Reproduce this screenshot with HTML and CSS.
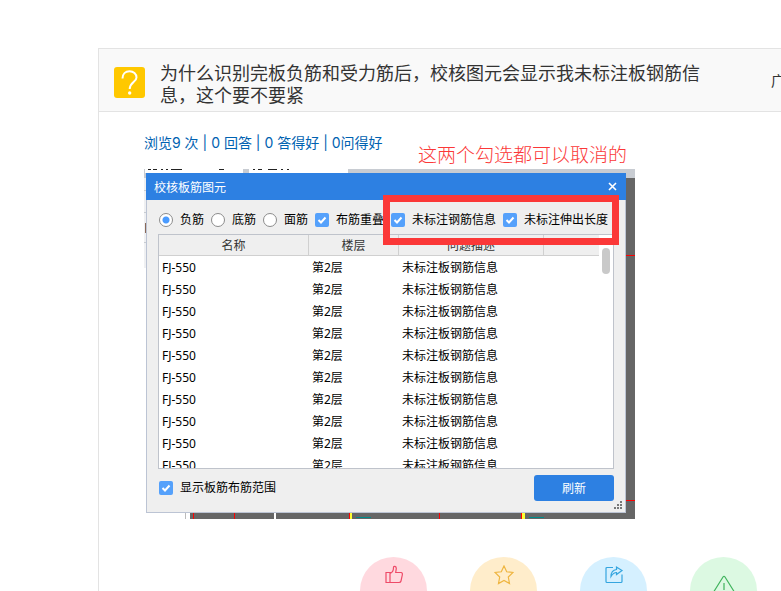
FILE: index.html
```html
<!DOCTYPE html>
<html lang="zh-CN">
<head>
  <meta charset="UTF-8">
  <meta name="viewport" content="width=device-width, initial-scale=1.0">
  <title>问答</title>
  <link rel="stylesheet" href="styles.css">
</head>
<body>

  <main class="question">
    <header class="question-head">
      <svg class="question-icon" viewBox="0 0 31 31">
        <rect width="31" height="31" rx="3" fill="#ffc800"/>
        <path d="M8.500 11.500C8.500 6.800 11.500 4.200 15.500 4.200S22.500 7 22.500 10.500C22.500 15 15.700 15.500 15.700 22" fill="none" stroke="#fff" stroke-width="2"/>
        <circle cx="15.700" cy="26" r="1.700" fill="#fff"/>
      </svg>
      <h1>为什么识别完板负筋和受力筋后，校核图元会显示我未标注板钢筋信息，这个要不要紧</h1>
      <span class="author">广</span>
    </header>

    <div class="question-body">
      <p class="stats">浏览9 次 | 0 回答 | 0 答得好 | 0问得好</p>

      <p class="note">这两个勾选都可以取消的</p>
      <div class="shot">
        <svg class="backdrop" viewBox="0 0 491 350" shape-rendering="crispEdges">
          <rect x="46" width="445" height="350" fill="#666"/>
          <rect width="491" height="9" fill="#c8ccd2"/>
          <rect x="1" width="98" height="4" fill="#fff"/>
          <rect x="105" width="99" height="4" fill="#fff"/>
          <path d="M4 .5H7M9 .5H13M17 .5H19M22 .5H24M27 .5H38M75 .5H80M109 .5H111M114 .5H118M124 .5H133M137 .5H139M143 .5H145" stroke="#222"/>
          <rect x="0" y="9" width="2" height="90" fill="#eff0f2"/>
          <path d="M0 21.500H2M0 43.500H2M0 73.500H2" stroke="#c8ccd2"/>
          <path d="M1.500 54V64" stroke="#8a6a5a"/>
          <path d="M41.500 344V350" stroke="#bbb"/>
          <path d="M49.500 344V350M90.500 344V350M90.500 344V350M205.500 344V350M377.500 344V350M295.500 344V350M482 331.500H491M482 86.500H491" stroke="#f00"/>
          <path d="M131 344V350" stroke="#fff" stroke-width="2"/>
          <path d="M207 344V350" stroke="#ff3" stroke-width="2"/>
          <path d="M379.500 344V350" stroke="#ff3" stroke-width="3"/>
          <path d="M212 348.500H227M385 348.500H400" stroke="#008b8b"/>
        </svg>

        <section class="dialog">
          <div class="dialog-title">
            <h2>校核板筋图元</h2>
            <button class="close" type="button" aria-label="关闭">
              <svg viewBox="0 0 9 9"><path d="M1 1L8 8M8 1L1 8" stroke="#fff" stroke-width="1.600"/></svg>
            </button>
          </div>

          <form class="dialog-body">
            <div class="options">
              <label><input type="radio" name="kind" checked>负筋</label>
              <label><input type="radio" name="kind">底筋</label>
              <label><input type="radio" name="kind">面筋</label>
              <label><input type="checkbox" checked>布筋重叠</label>
              <label><input type="checkbox" checked>未标注钢筋信息</label>
              <label><input type="checkbox" checked>未标注伸出长度</label>
            </div>

            <div class="list">
              <table>
                <colgroup><col class="col-name"><col class="col-floor"><col class="col-info"><col></colgroup>
                <thead>
                  <tr><th>名称</th><th>楼层</th><th>问题描述</th><th></th></tr>
                </thead>
                <tbody>
                  <tr><td>FJ-550</td><td>第2层</td><td>未标注板钢筋信息</td><td></td></tr>
                  <tr><td>FJ-550</td><td>第2层</td><td>未标注板钢筋信息</td><td></td></tr>
                  <tr><td>FJ-550</td><td>第2层</td><td>未标注板钢筋信息</td><td></td></tr>
                  <tr><td>FJ-550</td><td>第2层</td><td>未标注板钢筋信息</td><td></td></tr>
                  <tr><td>FJ-550</td><td>第2层</td><td>未标注板钢筋信息</td><td></td></tr>
                  <tr><td>FJ-550</td><td>第2层</td><td>未标注板钢筋信息</td><td></td></tr>
                  <tr><td>FJ-550</td><td>第2层</td><td>未标注板钢筋信息</td><td></td></tr>
                  <tr><td>FJ-550</td><td>第2层</td><td>未标注板钢筋信息</td><td></td></tr>
                  <tr><td>FJ-550</td><td>第2层</td><td>未标注板钢筋信息</td><td></td></tr>
                  <tr><td>FJ-550</td><td>第2层</td><td>未标注板钢筋信息</td><td></td></tr>
                </tbody>
              </table>
              <div class="scrollbar"><span class="thumb"></span></div>
            </div>

            <div class="dialog-foot">
              <label><input type="checkbox" checked>显示板筋布筋范围</label>
              <button class="refresh" type="button">刷新</button>
            </div>
          </form>

          <svg class="grip" viewBox="0 0 8 8" shape-rendering="crispEdges">
            <path d="M6 0h2v2h-2zM3 3h2v2h-2zM6 3h2v2h-2zM0 6h2v2h-2zM3 6h2v2h-2zM6 6h2v2h-2z" fill="#777"/>
          </svg>
        </section>
        <div class="highlight"></div>
      </div>

      <div class="actions">
        <button class="action like" type="button" aria-label="点赞">
          <svg viewBox="0 0 20 20"><path d="M2 7.500h4v10H2zM6 8.500C8.500 7.500 9.500 5.500 9.500 2.500C9.500 .8 12.300 1 12.300 3.500L11.700 7.500H17C18.500 7.500 18.500 9 18.300 10L17 16C16.700 17.300 16 17.500 15 17.500H6"/></svg>
        </button>
        <button class="action star" type="button" aria-label="收藏">
          <svg viewBox="0 0 20 20"><path d="M10 1L12.700 6.800L19 7.500L14.300 12L15.500 18.500L10 15.500L4.500 18.500L5.700 12L1 7.500L7.300 6.800Z"/></svg>
        </button>
        <button class="action share" type="button" aria-label="分享">
          <svg viewBox="0 0 20 20"><path d="M9 2.500H3Q2 2.500 2 3.500V16.500Q2 17.500 3 17.500H17Q18 17.500 18 16.500V9.500M7 11.500C7 7.500 9 5 12.500 4.500V2L18 5.500L12.500 9.500V7.500C10 7.500 8.500 9 7 11.500Z"/></svg>
        </button>
        <button class="action report" type="button" aria-label="举报">
          <svg viewBox="0 0 24 24"><path d="M11 2Q12 .5 13 2L23 18Q24 20 22 20H2Q0 20 1 18ZM12 8V15M12 16.500V18"/></svg>
        </button>
      </div>
    </div>
  </main>

</body>
</html>
```
FILE: styles.css
```css
body {
  font-family: "Noto Sans", "Noto Sans CJK SC", sans-serif;
  background-color: #fff;
  color: #333;
  margin: 0;
  overflow: hidden;
}

h1, h2, p {
  margin: 0;
  font-weight: normal;
}

button {
  border: none;
  padding: 0;
  font-family: inherit;
  cursor: pointer;
}

.question {
  margin: 48px 0 0 98px;
  border-top: 1px solid #e3e3e3;
  border-left: 1px solid #e3e3e3;
}

/* question title */
.question-head {
  display: flex;
  align-items: center;
  padding: 0 0 0 15px;
  background-color: #f9f9f9;
  border-bottom: 1px solid #e3e3e3;
}

.question-icon {
  flex: none;
  width: 31px;
  height: 31px;
  margin-top: 4px;
}

.question-head h1 {
  flex: 1;
  padding: 13px 60px 5px 15px;
  font-size: 18px;
  line-height: 22px;
}

.author {
  flex: 0 0 10px;
  min-width: 0;
  white-space: nowrap;
  font-size: 14px;
}

.question-body {
  padding: 20px 0 0 45px;
}

.stats {
  font-family: Inter, "Noto Sans CJK SC", sans-serif;
  font-size: 14px;
  line-height: 22px;
  color: #0062b1;
}

/* picture in the answer */
.note {
  width: 483px;
  text-align: right;
  font-family: "Noto Sans CJK SC", sans-serif;
  font-size: 19px;
  line-height: 24px;
  margin-top: -12px;
  padding-bottom: 3px;
  color: #fb3838;
  font-weight: 300;
}

.shot {
  position: relative;
  width: 491px;
  padding: 4px 0 6px 2px;
  box-sizing: border-box;
}

.backdrop {
  position: absolute;
  top: 0;
  left: 0;
  width: 491px;
  height: 350px;
}

.dialog {
  position: relative;
  width: 480px;
  box-sizing: border-box;
  background-color: #efefef;
  border: 1px solid #bcc4d4;
  border-top: none;
  color: #000;
  font-size: 12px;
}

.dialog-title {
  display: flex;
  align-items: center;
  justify-content: space-between;
  margin: 0 -1px;
  padding: 0 9px 0 8px;
  height: 27px;
  background-color: #2d80e2;
  color: #fff;
}

.dialog-title h2 {
  font-size: 12px;
}

.close {
  display: flex;
  background: none;
}

.close svg {
  width: 9px;
  height: 9px;
}

.dialog-body {
  padding: 10px 11px 11px;
}

.options {
  display: flex;
  gap: 7px;
  padding: 0 0 4px 1px;
}

.dialog label {
  display: flex;
  align-items: center;
  gap: 7px;
  line-height: 20px;
  white-space: nowrap;
}

.dialog input {
  appearance: none;
  flex: none;
  width: 14px;
  height: 14px;
  margin: 0;
  border-radius: 2px;
  background-color: #55a1fb;
}

.dialog input[type="checkbox"] {
  background-image: url("data:image/svg+xml,%3Csvg xmlns='http://www.w3.org/2000/svg' viewBox='0 0 14 14'%3E%3Cpath d='M3.500 7L6 9.500L10.500 4.500' fill='none' stroke='white' stroke-width='2'/%3E%3C/svg%3E");
}

.dialog input[type="radio"] {
  border: 1px solid #8c8c8c;
  border-radius: 50%;
  background-color: #fff;
}

.dialog input[type="radio"]:checked {
  background-image: radial-gradient(circle, #4a9bff 3px, transparent 4px);
}

.list {
  display: flex;
  height: 233px;
  border: 1px solid #bfc3cb;
  background-color: #fff;
  overflow: hidden;
}

.list table {
  flex: 1;
  table-layout: fixed;
  border-collapse: separate;
  border-spacing: 0;
}

.col-name {
  width: 150px;
}

.col-floor {
  width: 90px;
}

.col-info {
  width: 145px;
}

.list th {
  height: 18px;
  padding: 2px 0 0;
  background-color: #efefef;
  border-right: 1px solid #d0d0d0;
  border-bottom: 1px solid #d0d0d0;
  color: #333;
  font-weight: normal;
  line-height: 18px;
}

.list th:last-child {
  border-right: none;
}

.list td {
  height: 20px;
  padding: 2px 0 0 3px;
  line-height: 20px;
}

.scrollbar {
  width: 14px;
  padding: 13px 3px 0;
  box-sizing: border-box;
}

.thumb {
  display: block;
  height: 26px;
  border-radius: 4px;
  background-color: #c9c9c9;
}

.dialog-foot {
  display: flex;
  align-items: center;
  justify-content: space-between;
  padding: 6px 0 0 1px;
}

.refresh {
  width: 80px;
  height: 26px;
  border-radius: 3px;
  background-color: #2d80e2;
  color: #fff;
  font-size: 12px;
}

.grip {
  position: absolute;
  right: 3px;
  bottom: 3px;
  width: 8px;
  height: 8px;
}

/* red frame drawn over the two checkboxes */
.highlight {
  position: absolute;
  top: 26px;
  left: 239px;
  width: 236px;
  height: 50px;
  box-sizing: border-box;
  border: 7px solid #fb3838;
}

.actions {
  display: flex;
  gap: 43px;
  padding: 38px 0 0 216px;
}

.action {
  display: flex;
  justify-content: center;
  flex: none;
  width: 67px;
  height: 67px;
  padding-top: 8px;
  box-sizing: border-box;
  border-radius: 50%;
}

.action svg {
  width: 20px;
  height: 20px;
  fill: none;
  stroke: currentColor;
  stroke-width: 1.2;
}

.like {
  background-color: #ffd9df;
  color: #ee4a68;
}

.star {
  background-color: #ffedcb;
  color: #efb540;
}

.share {
  background-color: #d5f0ff;
  color: #34a5df;
}

.report {
  padding-top: 18px;
  background-color: #dcf9e2;
  color: #3fb35c;
}

.report svg {
  width: 24px;
  height: 24px;
}
```
